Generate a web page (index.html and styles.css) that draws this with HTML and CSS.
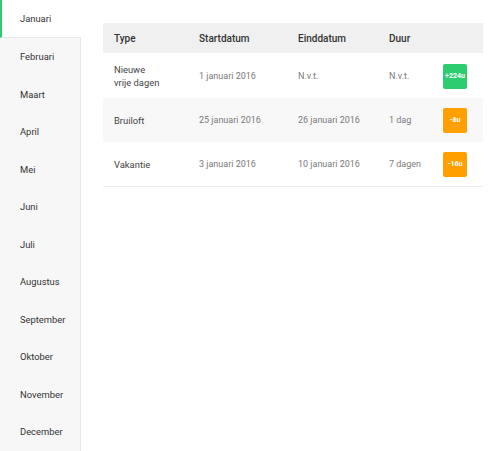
FILE: index.html
```html
<!DOCTYPE html>
<html>
<head>
<meta charset="utf-8">
<link rel="stylesheet" href="styles.css">
</head>
<body>
<div class="page">
  <nav class="sidebar">
    <div class="month active">Januari</div>
    <div class="month">Februari</div>
    <div class="month">Maart</div>
    <div class="month">April</div>
    <div class="month">Mei</div>
    <div class="month">Juni</div>
    <div class="month">Juli</div>
    <div class="month">Augustus</div>
    <div class="month">September</div>
    <div class="month">Oktober</div>
    <div class="month">November</div>
    <div class="month">December</div>
  </nav>
  <main class="content">
    <table class="table">
      <thead>
        <tr>
          <th class="c-type">Type</th>
          <th class="c-start">Startdatum</th>
          <th class="c-end">Einddatum</th>
          <th class="c-dur">Duur</th>
          <th class="c-badge"></th>
        </tr>
      </thead>
      <tbody>
        <tr class="r1">
          <td class="type">Nieuwe<br>vrije dagen</td>
          <td>1 januari 2016</td>
          <td>N.v.t.</td>
          <td>N.v.t.</td>
          <td><span class="badge green">+224u</span></td>
        </tr>
        <tr class="r2 alt">
          <td class="type">Bruiloft</td>
          <td>25 januari 2016</td>
          <td>26 januari 2016</td>
          <td>1 dag</td>
          <td><span class="badge orange">-8u</span></td>
        </tr>
        <tr class="r3">
          <td class="type">Vakantie</td>
          <td>3 januari 2016</td>
          <td>10 januari 2016</td>
          <td>7 dagen</td>
          <td><span class="badge orange">-16u</span></td>
        </tr>
      </tbody>
    </table>
  </main>
</div>
</body>
</html>
```
FILE: styles.css
```css
html, body {
  margin: 0;
  padding: 0;
  background: #fff;
  font-family: Roboto, "Liberation Sans", sans-serif;
}
.page {
  display: flex;
  height: 451px;
  overflow: hidden;
}
.sidebar {
  width: 80px;
  flex: none;
  background: #f7f7f7;
  border-right: 1px solid #e8e8e8;
  display: flex;
  flex-direction: column;
}
.month {
  height: 37.5px;
  flex: none;
  display: flex;
  align-items: center;
  padding-left: 20px;
  font-size: 9.4px;
  color: #333;
  box-sizing: border-box;
}
.month.active {
  background: #fff;
  border-left: 2px solid #2ecc71;
  padding-left: 18px;
  height: 38px;
  border-bottom: 1px solid #e8e8e8;
  margin-right: -1px;
  position: relative;
}
.content {
  padding: 23px 0 0 22px;
}
.table {
  width: 380px;
  border-collapse: collapse;
  font-size: 9px;
}
.table th {
  background: #f0f0f0;
  height: 29px;
  padding: 1px 0 0 11px;
  text-align: left;
  font-weight: 500;
  color: #333;
  font-size: 10px;
}
.c-type { width: 74px; }
.c-start { width: 88px; }
.c-end { width: 80px; }
.c-dur { width: 43px; }
.table td {
  padding: 1px 0 0 11px;
  color: #7a7a7a;
  font-weight: 400;
  line-height: 13px;
  vertical-align: middle;
}
.table td.type {
  color: #444;
  font-size: 9.4px;
}
.r1 td { height: 44px; }
.r2 td, .r3 td { height: 43px; }
.r3 td { border-bottom: 1px solid #eeeeee; }
.alt td { background: #f8f8f8; }
.badge {
  display: flex;
  align-items: center;
  justify-content: center;
  width: 24px;
  height: 25px;
  border-radius: 2px;
  color: #fff;
  font-size: 7px;
  font-weight: 700;
}
.green { background: #2ecc71; }
.orange { background: #ff9f00; }
```
